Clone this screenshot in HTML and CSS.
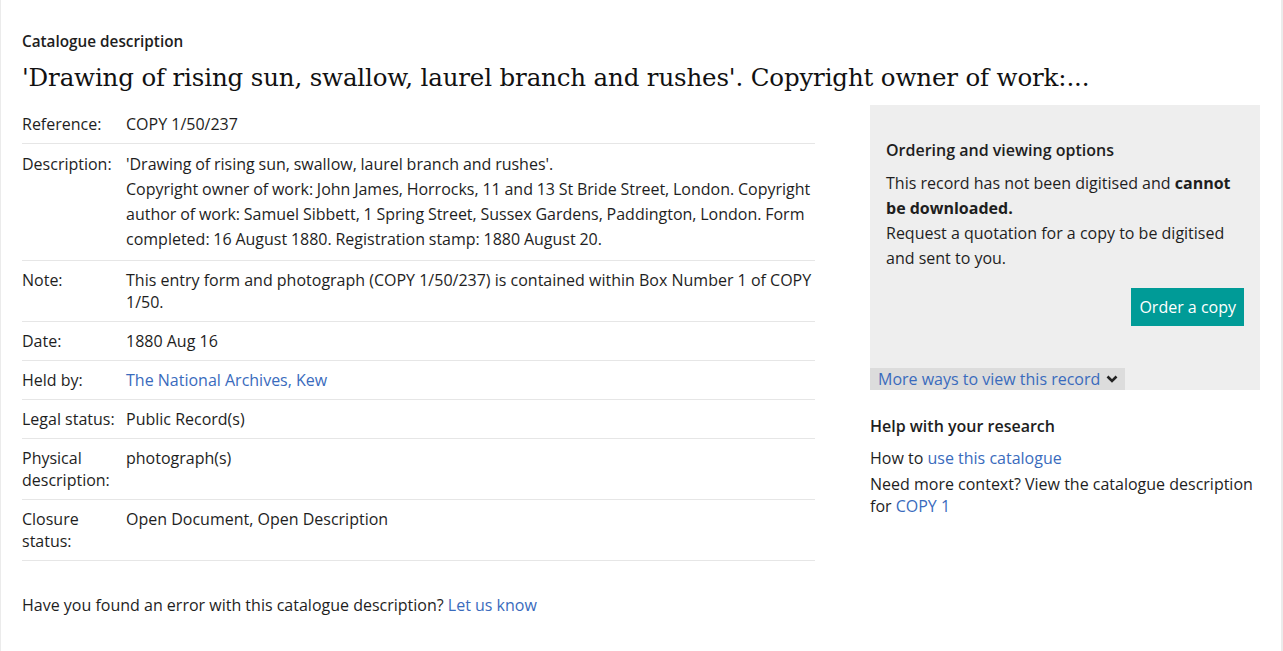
FILE: index.html
```html
<!DOCTYPE html>
<html lang="en">
<head>
<meta charset="utf-8">
<title>Catalogue description</title>
<link rel="stylesheet" href="styles.css">
</head>
<body>
<div class="page">
  <div class="eyebrow">Catalogue description</div>
  <h1 class="title">'Drawing of rising sun, swallow, laurel branch and rushes'. Copyright owner of work:...</h1>
  <div class="cols">
    <div class="main">
      <table class="record">
        <tr><th>Reference:</th><td>COPY 1/50/237</td></tr>
        <tr><th>Description:</th><td class="desc"><span>'Drawing of rising sun, swallow, laurel branch and rushes'.</span><br><span>Copyright owner of work: John James, Horrocks, 11 and 13 St Bride Street, London. Copyright author of work: Samuel Sibbett, 1 Spring Street, Sussex Gardens, Paddington, London. Form completed: 16 August 1880. Registration stamp: 1880 August 20.</span></td></tr>
        <tr><th>Note:</th><td>This entry form and photograph (COPY 1/50/237) is contained within Box Number 1 of COPY 1/50.</td></tr>
        <tr><th>Date:</th><td>1880 Aug 16</td></tr>
        <tr><th>Held by:</th><td><a href="#">The National Archives, Kew</a></td></tr>
        <tr><th>Legal status:</th><td>Public Record(s)</td></tr>
        <tr><th>Physical description:</th><td>photograph(s)</td></tr>
        <tr><th>Closure status:</th><td>Open Document, Open Description</td></tr>
      </table>
      <p class="feedback">Have you found an error with this catalogue description? <a href="#">Let us know</a></p>
    </div>
    <aside class="side">
      <div class="order-box">
        <div class="order-inner">
          <h2 class="side-h">Ordering and viewing options</h2>
          <p class="order-text">This record has not been digitised and <strong>cannot be downloaded.</strong><br>Request a quotation for a copy to be digitised and sent to you.</p>
          <div class="btn-row"><a class="btn" href="#">Order a copy</a></div>
        </div>
        <a class="more" href="#">More ways to view this record <svg class="chev" width="12" height="8" viewBox="0 0 12 8"><path d="M1.5 1.5 L6 6 L10.5 1.5" fill="none" stroke="#222" stroke-width="2.6"/></svg></a>
      </div>
      <h2 class="help-h">Help with your research</h2>
      <p class="help-text">How to <a href="#">use this catalogue</a></p>
      <p class="help-text">Need more context? View the catalogue description for <a href="#">COPY 1</a></p>
    </aside>
  </div>
</div>
</body>
</html>
```
FILE: styles.css
```css
html, body {
  margin: 0;
  padding: 0;
  background: #fff;
}
body {
  font-family: "Open Sans", "Noto Sans", sans-serif;
  font-size: 16px;
  line-height: 22px;
  color: #1e1e1e;
}
a {
  color: #3a6bbd;
  text-decoration: none;
}
.page {
  box-sizing: border-box;
  width: 1283px;
  min-height: 651px;
  border-left: 1px solid #ebebeb;
  border-right: 2px solid #ebebeb;
  padding: 30px 21px 0 21px;
}
.eyebrow {
  font-weight: 600;
  font-size: 15.3px;
  line-height: 22px;
}
.title {
  margin: 9px 0 10px 0;
  font-family: "DejaVu Serif", "Liberation Serif", serif;
  font-weight: normal;
  font-size: 24.5px;
  line-height: 34px;
  color: #111;
  letter-spacing: -0.15px;
  white-space: nowrap;
}
.cols {
  display: flex;
  gap: 55px;
}
.main {
  width: 793px;
}
.record {
  width: 100%;
  border-collapse: collapse;
}
.record tr {
  border-bottom: 1px solid #e6e6e6;
}
.record th {
  width: 104px;
  padding: 8px 0;
  text-align: left;
  font-weight: normal;
  vertical-align: top;
  box-sizing: border-box;
}
.record td {
  padding: 8px 0;
  vertical-align: top;
}
.record td.desc {
  line-height: 25px;
  word-spacing: -0.4px;
}
.record th, .record td {
  font-size: 16px;
}
.record tr:nth-child(2) th {
  line-height: 25px;
}
.feedback {
  margin: 33px 0 0 0;
}
.side {
  width: 390px;
}
.order-box {
  background: #eeeeee;
}
.order-inner {
  padding: 34px 16px 42px 16px;
}
.side-h {
  margin: 0 0 10px 0;
  font-size: 16px;
  font-weight: 600;
  line-height: 22px;
}
.order-text {
  margin: 0;
  line-height: 25px;
}
.order-text strong {
  font-weight: 700;
}
.btn-row {
  display: flex;
  justify-content: flex-end;
  margin-top: 17px;
}
.btn {
  display: block;
  background: #009b97;
  color: #fff;
  padding: 0 8px;
  height: 38px;
  line-height: 38px;
  font-size: 16px;
}
.more {
  display: inline-flex;
  align-items: center;
  gap: 6px;
  background: #dcdcdc;
  height: 22px;
  line-height: 22px;
  padding: 0 7px 0 8px;
  font-size: 16px;
}
.more .chev {
  display: block;
}
.help-h {
  margin: 25px 0 10px 0;
  font-size: 16px;
  font-weight: 600;
  line-height: 22px;
}
.help-text {
  margin: 0 0 4px 0;
}
```
